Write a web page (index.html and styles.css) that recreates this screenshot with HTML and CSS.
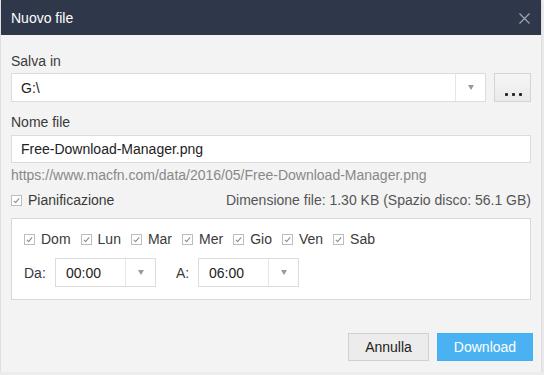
FILE: index.html
```html
<!DOCTYPE html>
<html lang="it">
<head>
  <meta charset="UTF-8" />
  <title>Nuovo file</title>
  <link rel="stylesheet" href="styles.css">
</head>
<body>
  <div class="dialog">
    <header class="title-bar">
      <span>Nuovo file</span>
      <svg class="close" width="11" height="11" viewBox="0 0 11 11"><path d="M0.5 0.5 L10.5 10.5 M10.5 0.5 L0.5 10.5" stroke="#a3a9b4" stroke-width="1.1" fill="none"/></svg>
    </header>

    <div class="content">
      <label class="field-label">Salva in</label>
      <div class="path-row">
        <div class="select wide">
          <span class="value">G:\</span>
          <span class="arrow"></span>
        </div>
        <button class="browse">
          <svg width="18" height="3" viewBox="0 0 18 3"><rect x="1" y="0" width="3" height="3" rx="1" fill="#222"/><rect x="8" y="0" width="3" height="3" rx="1" fill="#222"/><rect x="15" y="0" width="3" height="3" rx="1" fill="#222"/></svg>
        </button>
      </div>

      <label class="field-label second">Nome file</label>
      <div class="text-input">Free-Download-Manager.png</div>
      <p class="url">https://www.macfn.com/data/2016/05/Free-Download-Manager.png</p>

      <div class="info-row">
        <span class="check"><i class="box"></i>Pianificazione</span>
        <span class="size">Dimensione file: 1.30 KB (Spazio disco: 56.1 GB)</span>
      </div>

      <div class="schedule">
        <div class="days">
          <span class="check"><i class="box"></i>Dom</span>
          <span class="check"><i class="box"></i>Lun</span>
          <span class="check"><i class="box"></i>Mar</span>
          <span class="check"><i class="box"></i>Mer</span>
          <span class="check"><i class="box"></i>Gio</span>
          <span class="check"><i class="box"></i>Ven</span>
          <span class="check"><i class="box"></i>Sab</span>
        </div>
        <div class="times">
          <span class="time-label">Da:</span>
          <div class="select time">
            <span class="value">00:00</span>
            <span class="arrow"></span>
          </div>
          <span class="time-label to">A:</span>
          <div class="select time">
            <span class="value">06:00</span>
            <span class="arrow"></span>
          </div>
        </div>
      </div>

      <div class="actions">
        <button class="btn cancel">Annulla</button>
        <button class="btn primary">Download</button>
      </div>
    </div>
  </div>
</body>
</html>
```

FILE: styles.css
```css
body {
  margin: 0;
  background: #ececec;
  font-family: "Liberation Sans", Arial, sans-serif;
  font-size: 14px;
  color: #3a3a3a;
}
.dialog {
  width: 540px;
  height: 372px;
  margin-left: 1px;
  background: #f3f3f3;
  box-shadow: 0 1px 3px rgba(0, 0, 0, 0.15);
  display: flex;
  flex-direction: column;
}
.title-bar {
  height: 35px;
  background: #2f384b;
  color: #fff;
  font-size: 14px;
  display: flex;
  align-items: center;
  justify-content: space-between;
  padding: 0 11px 0 10px;
}
.close {
  margin-top: 1px;
}
.content {
  flex: 1;
  padding: 0 10px;
  display: flex;
  flex-direction: column;
}
.field-label {
  display: block;
  line-height: 16px;
  margin-top: 18px;
  margin-bottom: 4px;
}
.field-label.second {
  margin-top: 12px;
  margin-bottom: 5px;
}
.path-row {
  display: flex;
  gap: 8px;
}
.select {
  height: 27px;
  background: #fff;
  border: 1px solid #dcdcdc;
  display: flex;
  align-items: center;
}
.select .value {
  flex: 1;
  padding-left: 9px;
  color: #222;
}
.select .arrow {
  width: 29px;
  align-self: stretch;
  border-left: 1px solid #e6e6e6;
  display: flex;
  align-items: center;
  justify-content: center;
}
.select .arrow::after {
  content: "";
  border-left: 3px solid transparent;
  border-right: 3px solid transparent;
  border-top: 5px solid #999;
}
.select.wide {
  flex: 1;
}
.browse {
  width: 37px;
  height: 29px;
  border: 1px solid #d4d4d4;
  background: linear-gradient(#f6f6f6, #eaeaea);
  padding: 19px 0 0;
  display: flex;
  justify-content: center;
}
.text-input {
  height: 26px;
  line-height: 26px;
  background: #fff;
  border: 1px solid #dcdcdc;
  padding-left: 9px;
  color: #222;
}
.url {
  margin: 4px 0 0;
  line-height: 16px;
  color: #888;
}
.info-row {
  display: flex;
  justify-content: space-between;
  margin-top: 9px;
  line-height: 16px;
}
.size {
  color: #555;
}
.check {
  display: inline-flex;
  align-items: center;
}
.box {
  width: 9px;
  height: 9px;
  border: 1px solid #bdbdbd;
  background: #fff;
  margin-right: 6px;
  position: relative;
}
.box::after {
  content: "";
  position: absolute;
  left: 3px;
  top: 1px;
  width: 2px;
  height: 5px;
  border: solid #888;
  border-width: 0 1px 1px 0;
  transform: rotate(40deg);
}
.schedule {
  margin-top: 10px;
  height: 80px;
  background: #fff;
  border: 1px solid #d8d8d8;
  padding: 0 12px;
}
.days {
  display: flex;
  gap: 10px;
  margin-top: 12px;
  line-height: 16px;
}
.times {
  display: flex;
  align-items: center;
  margin-top: 11px;
}
.time-label {
  width: 31px;
}
.time-label.to {
  width: 22px;
  margin-left: 20px;
}
.select.time {
  width: 99px;
}
.select.time .value {
  padding-left: 10px;
}
.actions {
  margin-top: auto;
  margin-bottom: 11px;
  display: flex;
  justify-content: flex-end;
  gap: 8px;
}
.btn {
  height: 28px;
  font-family: inherit;
  font-size: 14px;
  border: 1px solid #d0d0d0;
}
.cancel {
  width: 81px;
  background: #ececec;
  color: #222;
}
.primary {
  width: 96px;
  margin-right: -2px;
  background: #4ab2f2;
  border-color: #45aeee;
  color: #fff;
}
```
